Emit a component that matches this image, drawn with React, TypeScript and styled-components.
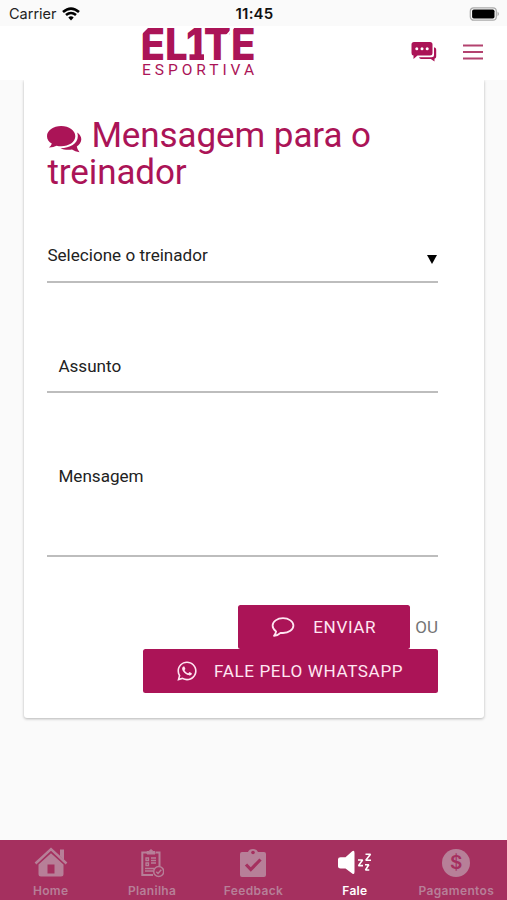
import React from 'react';
import styled, { createGlobalStyle } from 'styled-components';
import { FaWhatsapp } from 'react-icons/fa';

const brand = '#ab1457';

const GlobalStyle = createGlobalStyle`
  *, *::before, *::after { box-sizing: border-box; }
  body { margin: 0; background: #fafafa; font-family: Roboto, sans-serif; }
`;

const Screen = styled.div`
  display: flex;
  flex-direction: column;
  width: 507px;
  height: 900px;
  overflow: hidden;
  background: #fafafa;
`;

const StatusBar = styled.div`
  display: grid;
  grid-template-columns: 1fr auto 1fr;
  align-items: center;
  height: 26px;
  padding: 2px 7px 0 9px;
  background: #fafafa;
  font: 400 14.5px/24px Inter, sans-serif;
  color: #222;
`;

const Carrier = styled.div`
  display: flex;
  align-items: center;
  gap: 5px;
`;

const Clock = styled.div`
  font-weight: 600;
  font-size: 15px;
  letter-spacing: 0.2px;
  color: #111;
`;

const BatterySlot = styled.div`
  display: flex;
  justify-content: flex-end;
`;

const Header = styled.header`
  display: flex;
  justify-content: space-between;
  height: 54px;
  padding: 2px 24px 0 143px;
  background: #fff;
`;

const Logo = styled.svg`
  display: block;
  overflow: visible;
`;

const HeaderActions = styled.div`
  display: flex;
  align-items: center;
  gap: 26px;
  height: 48px;
`;

const Card = styled.main`
  display: flex;
  flex-direction: column;
  height: 638px;
  margin: 0 23px 0 24px;
  padding: 37px 46px 0 23.4px;
  background: #fff;
  border-radius: 0 0 3px 3px;
  box-shadow: 0 1px 3px rgba(0, 0, 0, 0.28);
  clip-path: inset(0 -5px -5px -5px);
`;

const Title = styled.h1`
  margin: 0;
  height: 74px;
  font-size: 35px;
  font-weight: 400;
  line-height: 37px;
  letter-spacing: -0.08px;
  color: ${brand};

  svg {
    margin-right: 8px;
    vertical-align: -6px;
  }
`;

const Field = styled.div<{ $height: number; $top: number; $indent?: number }>`
  display: flex;
  justify-content: space-between;
  align-items: flex-start;
  height: ${(p) => p.$height}px;
  margin-top: ${(p) => p.$top}px;
  padding-left: ${(p) => p.$indent ?? 0}px;
  border-bottom: 2px solid #bdbdbd;
  font-size: 17.1px;
  line-height: 20px;
  color: #222;
`;

const Caret = styled.span`
  width: 0;
  margin: 10px 1px 0 0;
  border: 5.5px solid transparent;
  border-top: 9px solid #000;
  border-bottom: 0;
`;

const Actions = styled.div`
  display: flex;
  flex-direction: column;
  align-items: flex-end;
  margin-top: 48px;
`;

const ActionRow = styled.div`
  display: flex;
  align-items: center;
  gap: 5px;
  height: 44px;
  font-size: 17px;
  line-height: 20px;
  color: #757575;
`;

const Separator = styled.span`
  padding-bottom: 1px;
`;

const Button = styled.button<{ $width: number; $gap: number }>`
  display: flex;
  align-items: center;
  gap: ${(p) => p.$gap}px;
  width: ${(p) => p.$width}px;
  height: 44px;
  padding: 0 0 1px 33px;
  border: 0;
  border-radius: 2.5px;
  background: ${brand};
  font: 400 17.1px/20px Roboto, sans-serif;
  letter-spacing: 0.62px;
  white-space: nowrap;
  color: #ffe6f2;

  svg { flex: none; }
`;

const TabBar = styled.nav`
  display: grid;
  grid-template-columns: repeat(5, 1fr);
  height: 60px;
  margin-top: auto;
  background: #a5305f;
`;

const Tab = styled.a<{ $active?: boolean }>`
  display: flex;
  flex-direction: column;
  align-items: center;
  padding-top: 6px;
  font: 600 12px/16px Inter, sans-serif;
  letter-spacing: 0.35px;
  color: ${(p) => (p.$active ? '#fff' : '#b77f98')};

  svg { margin-bottom: 3px; }
`;

const CommentsIcon = () => (
  <svg width="36" height="28" viewBox="0 0 36 28" fill="currentColor">
    <path d="M14.200 1C22 1 28.300 5.500 28.300 11.200S22 21.200 14.200 21.200Q11.800 21.200 9.600 20.700Q6.300 22.600 2 22.500Q4.500 20.500 4.800 18.600C1.800 16.800 0 14.200 0 11.200C0 5.500 6.300 1 14.200 1Z" />
    <path d="M30.200 7.500C33 9.300 34.300 11.800 34.300 14.300C34.300 17.200 32.500 19.800 29.800 21.500Q30.200 24.500 32.500 27.300Q28 26.800 25 24.500C21 25.200 16.500 24.700 13.500 23.200C23 23.200 30.800 18.500 30.800 11.500Q30.800 9.500 30.200 7.500Z" />
  </svg>
);

const CommentOutlineIcon = () => (
  <svg width="24" height="22" viewBox="0 0 24 22" fill="none" stroke="currentColor" strokeWidth="1.8" strokeLinejoin="round">
    <path d="M12 2.200C17.800 2.200 22.400 5.500 22.400 9.600S17.800 17 12 17Q10.800 17 9.600 16.800Q7 19.400 3 19.800Q4.800 17.800 5.100 15.400C3 14 1.600 11.900 1.600 9.600C1.600 5.500 6.200 2.200 12 2.200Z" />
  </svg>
);

const WifiIcon = () => (
  <svg width="18" height="14" viewBox="0 0 18 14" fill="none" stroke="#000" strokeWidth="2.6">
    <path d="M1 5.1Q9-1.9 17 5.1" />
    <path d="M4 8.1Q9 3.9 14 8.1" />
    <path d="M6.3 10.5Q9 8 11.7 10.5L9 13.4Z" fill="#000" stroke="none" />
  </svg>
);

const BatteryIcon = () => (
  <svg width="31" height="14" viewBox="0 0 31 14">
    <rect x="1.300" y=".8" width="26" height="12.4" rx="3.4" fill="#fafafa" stroke="#aaa" strokeWidth="1.2" />
    <rect x="3.100" y="2.6" width="22.4" height="8.8" rx="1.7" />
    <path d="M28.6 4.6Q31 7 28.6 9.4Z" fill="#999" />
  </svg>
);

const ChatIcon = () => (
  <svg width="26" height="20" viewBox="0 0 26 20" fill={brand}>
    <path d="M3 0H19Q21.500 0 21.500 2.500V11Q21.500 13.500 19 13.500H6.500L2.500 17V13.500Q.5 13.500 .5 11V2.500Q.5 0 3 0Z" />
    <path d="M23 5.200Q25.200 5.500 25.200 7.500V14.500Q25.200 16.500 23.500 16.800V19.500L19.800 17H10Q8.500 17 8 15.300H20.500Q23 15.300 23 12.800Z" />
    <g fill="#fff">
      <circle cx="5.800" cy="6.700" r="1.500" />
      <circle cx="11" cy="6.700" r="1.500" />
      <circle cx="16.200" cy="6.700" r="1.500" />
    </g>
  </svg>
);

const MenuIcon = () => (
  <svg width="20" height="16" viewBox="0 0 20 16" stroke="#b3426f" strokeWidth="1.8">
    <path d="M0 1.500H20M0 8H20M0 14.500H20" />
  </svg>
);

const HomeIcon = () => (
  <svg width="34" height="34" viewBox="0 0 34 34" fill="currentColor">
    <path d="M1.500 17.500L17 3.200L32.500 17.500" fill="none" stroke="currentColor" strokeWidth="2.500" />
    <path d="M26 3.500H30V14L26 10Z" />
    <path fillRule="evenodd" d="M17 7.300L29.500 18.500V28Q29.500 30.500 27 30.500H7Q4.500 30.500 4.500 28V18.500ZM13.500 18.500V27.500H20.500V18.500Z" />
  </svg>
);

const SheetIcon = () => (
  <svg width="24" height="34" viewBox="0 0 24 34" fill="none" stroke="currentColor">
    <path d="M7 6.500H2.300V29H13M16 6.500H19.500V20" strokeWidth="2" />
    <path d="M7 8V5.500H9Q11 2 13 5.500H15V8Z" fill="currentColor" />
    <path d="M6 12H8.500V14.500H6ZM11 12H16M11 14.500H16M6 17H8.500V19.500H6ZM11 17H16M5 22.500H14M5 25H13" strokeWidth="1.300" />
    <circle cx="18.700" cy="25.500" r="5" fill="#a5305f" strokeWidth="1.500" />
    <path d="M16.300 25.700L18 27.500L21.300 23.700" strokeWidth="1.500" />
  </svg>
);

const FeedbackIcon = () => (
  <svg width="28" height="34" viewBox="0 0 28 34">
    <path fill="currentColor" d="M3 6H9Q10 3 14 3Q18 3 19 6H25Q27 6 27 8V29Q27 31 25 31H3Q1 31 1 29V8Q1 6 3 6Z" />
    <circle cx="14" cy="6.500" r="1.800" fill="#a5305f" />
    <path d="M7 18.500L11.800 23.500L21.500 13.500" fill="none" stroke="#a5305f" strokeWidth="3.200" />
  </svg>
);

const SpeakIcon = () => (
  <svg width="34" height="34" viewBox="0 0 34 34" fill="currentColor">
    <path d="M2.500 11.300H7.500L14.200 5.200Q16.500 3.800 16.500 7V26Q16.500 29 14.200 27.500L7.500 22.500H2.500Q0 22.500 0 20.500V13.300Q0 11.300 2.500 11.300Z" />
    <path d="M20 14H24.600L20.500 19.600H25M27.500 8.200H32.500L27.800 14.200H33M27 18.800H30.800L27.500 24H31.300" fill="none" stroke="currentColor" strokeWidth="1.600" strokeLinejoin="bevel" />
  </svg>
);

const Coin = styled.span`
  display: grid;
  place-items: center;
  width: 28px;
  height: 28px;
  margin: 3px 0 6px;
  border-radius: 50%;
  background: currentColor;
`;

const CoinSign = styled.span`
  font: 600 19px/28px Inter, sans-serif;
  letter-spacing: 0;
  color: #a5305f;
`;

export default function App() {
  return (
    <Screen>
      <GlobalStyle />
      <StatusBar>
        <Carrier>Carrier<WifiIcon /></Carrier>
        <Clock>11:45</Clock>
        <BatterySlot><BatteryIcon /></BatterySlot>
      </StatusBar>
      <Header>
        <Logo width="112" height="50" viewBox="0 0 112 50" fill={brand}>
          <text x="-2.500" y="32" fontFamily="Inter" fontWeight="800" fontSize="44" textLength="115" lengthAdjust="spacingAndGlyphs">EL1TE</text>
          <rect x="46.500" y="26.300" width="14.500" height="5.700" />
          <path d="M-1 0H5L-1 6ZM82 8L90 -1H92L84 9Z" fill="#fff" />
          <text x="-1" y="47.300" fontFamily="Roboto" fontWeight="400" fontSize="15.500" textLength="112" lengthAdjust="spacing">ESPORTIVA</text>
        </Logo>
        <HeaderActions><ChatIcon /><MenuIcon /></HeaderActions>
      </Header>
      <Card>
        <Title><CommentsIcon />Mensagem para o treinador</Title>
        <Field $top={54} $height={38}>Selecione o treinador<Caret /></Field>
        <Field $top={73} $height={37} $indent={11}>Assunto</Field>
        <Field $top={73} $height={91} $indent={11}>Mensagem</Field>
        <Actions>
          <ActionRow>
            <Button $width={172} $gap={18}><CommentOutlineIcon />ENVIAR</Button>
            <Separator>OU</Separator>
          </ActionRow>
          <Button $width={295} $gap={16}><FaWhatsapp size={22} />FALE PELO WHATSAPP</Button>
        </Actions>
      </Card>
      <TabBar>
        <Tab><HomeIcon />Home</Tab>
        <Tab><SheetIcon />Planilha</Tab>
        <Tab><FeedbackIcon />Feedback</Tab>
        <Tab $active><SpeakIcon />Fale</Tab>
        <Tab><Coin><CoinSign>$</CoinSign></Coin>Pagamentos</Tab>
      </TabBar>
    </Screen>
  );
}
